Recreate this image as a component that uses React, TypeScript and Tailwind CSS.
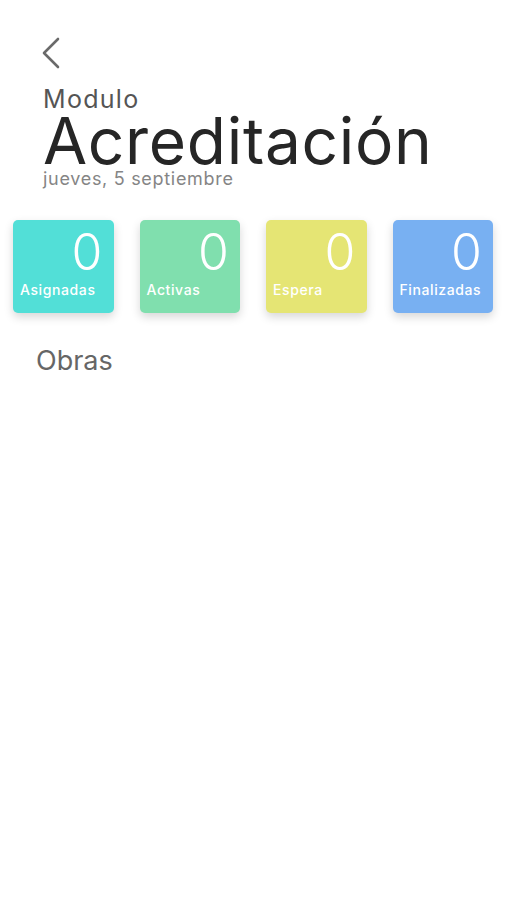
const stats = [
  { label: 'Asignadas', value: 0, color: 'bg-[#52dfd7]' },
  { label: 'Activas', value: 0, color: 'bg-[#80dfae]' },
  { label: 'Espera', value: 0, color: 'bg-[#e5e574]' },
  { label: 'Finalizadas', value: 0, color: 'bg-[#78b0f2]' },
];

export default function App() {
  return (
    <div className="min-h-[900px] w-[506px] bg-white font-['Inter',sans-serif]">
      {/* Header */}
      <div className="pt-[36px] pl-[43px] flex flex-col items-start">
        <button className="-ml-[2px] text-[#6a6a6a]">
          <svg width="20" height="34" viewBox="0 0 20 34" fill="none" stroke="currentColor">
            <path d="M17 3L3 17l14 14" strokeWidth={2.6} strokeLinecap="round" strokeLinejoin="round" />
          </svg>
        </button>
        <p className="mt-[16px] text-[25px] leading-[26px] tracking-[1.3px] text-[#555]">Modulo</p>
        <h1 className="text-[64px] leading-[57px] tracking-[0.7px] text-[#262626]">Acreditación</h1>
        <p className="text-[18px] leading-[20px] tracking-[0.7px] text-[#858585]">jueves, 5 septiembre</p>
      </div>

      {/* Stats */}
      <div className="mt-[31px] px-[13px] flex gap-[26px]">
        {stats.map((s) => (
          <div
            key={s.label}
            className={`${s.color} w-[101px] h-[93px] rounded-[5px] shadow-[0_4px_10px_rgba(0,0,0,0.16)] flex flex-col justify-between pt-[7px] px-[7px] pb-[15px] text-white`}
          >
            <span className="self-end pr-[4px] text-[50px] leading-[50px] font-light">{s.value}</span>
            <span className="text-[14px] leading-[16px] tracking-[0.6px] font-medium">{s.label}</span>
          </div>
        ))}
      </div>

      {/* Obras */}
      <h2 className="mt-[32px] pl-[36px] text-[27px] leading-[32px] text-[#666]">Obras</h2>
    </div>
  );
}
